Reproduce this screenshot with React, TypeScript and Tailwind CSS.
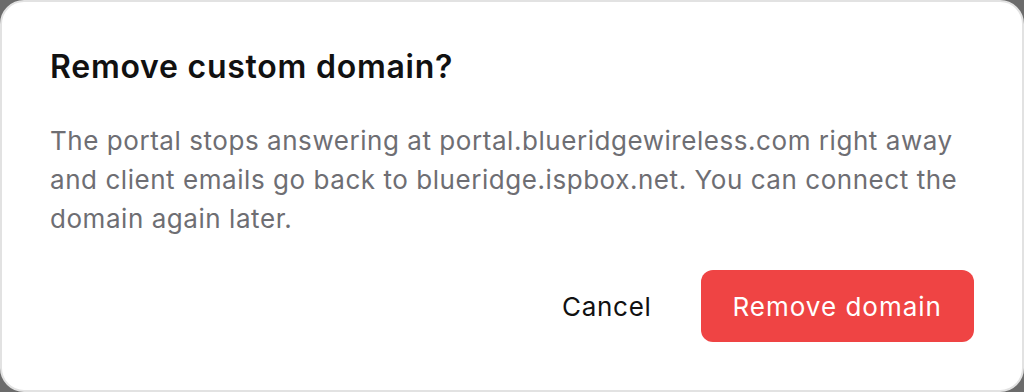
import React from 'react';

export default function App() {
  return (
    <div className="h-[392px] w-[1024px] bg-[#6b6b6b]">
      <div
        className="flex h-full w-full flex-col rounded-[24px] border-2 border-[#e2e2e2] bg-white px-[48px] pt-[43px] text-[#111]"
        style={{ fontFamily: 'Inter, "Noto Sans", sans-serif' }}
      >
        <h2 className="text-[32px] font-semibold leading-[44px] tracking-[0.75px]">
          Remove custom domain?
        </h2>
        <p className="mt-[32px] text-[26px] leading-[39px] tracking-[0.55px] text-[#6e6e73]">
          The portal stops answering at portal.blueridgewireless.com right away
          and client emails go back to blueridge.ispbox.net. You can connect the
          domain again later.
        </p>
        <div className="mt-[32px] flex items-center justify-end gap-[49px]">
          <button className="text-[26px] tracking-[0.7px] text-[#111]">Cancel</button>
          <button className="h-[72px] rounded-[12px] bg-[#ef4444] px-[32px] text-[26px] tracking-[1px] text-white">
            Remove domain
          </button>
        </div>
      </div>
    </div>
  );
}
